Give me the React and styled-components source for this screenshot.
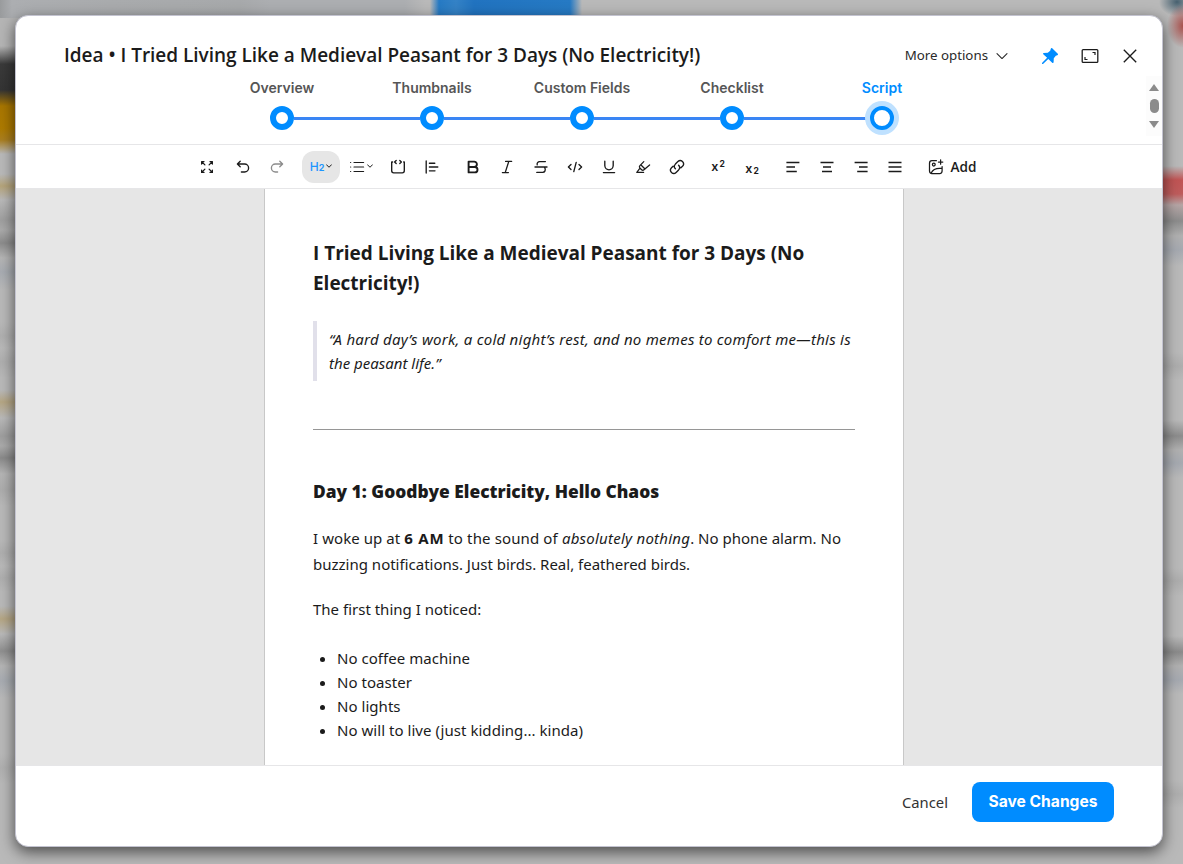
import React from "react";
import styled, { createGlobalStyle, css } from "styled-components";

const BLUE = "#008cff";
const INK = "#1b1b1b";
const UI_FONT = '"Noto Sans", "Open Sans", sans-serif';
const HEAD_FONT = '"Open Sans", "Noto Sans", sans-serif';

const GlobalStyle = createGlobalStyle`
  *, *::before, *::after { box-sizing: border-box; }
  body { margin: 0; background: #b9b9b9; color: ${INK}; font-family: ${UI_FONT}; }
  button { border: 0; padding: 0; margin: 0; background: none; font: inherit; color: inherit; }
  svg { display: block; flex: none; }
`;

const Page = styled.div`
  width: 1183px;
  height: 864px;
  padding: 15px 20px 17px 15px;
  overflow: hidden;
  background-color: #b9b9b9;
  background-image:
    radial-gradient(ellipse 16px 22px at 100% 26px, #a8504c 0%, rgba(168, 80, 76, 0) 100%),
    radial-gradient(ellipse 18px 14px at 1177px 2px, #46606f 0%, rgba(70, 96, 111, 0) 100%),
    linear-gradient(90deg, rgba(38, 122, 196, 0) 0, #267ac4 9px, #3482c6 26px, #2173c0 44px, #267ac4 140px, rgba(38, 122, 196, 0) 100%),
    linear-gradient(90deg, #999b9d 0, #acaeb1 12px, #a9abad 110px, #a7a9ab 240px, #acaeb1 270px, #acaeb1 405px, rgba(172, 174, 177, 0) 100%),
    linear-gradient(180deg, #b5b5b5 0, #b5b5b5 46px, #3a3a3a 64px, #343434 90px, #a87600 106px, #ad7a00 128px, #a97e20 140px, #b9b9b9 154px,
      #b9b9b9 174px, #b5a47a 186px, #b9b9b9 200px, #9f9f9f 220px, #aaa 230px, #8c8c8c 243px, #b5b5b5 258px, #a8acb2 272px, #b9b9b9 290px,
      #b9b9b9 322px, #b0b0b0 336px, #b9b9b9 348px, #afafaf 362px, #b9b9b9 378px, #b9b9b9 390px, #b5a684 402px, #b9b9b9 418px, #9e9e9e 436px, #aaa 446px,
      #8a8a8a 458px, #b5b5b5 474px, #adadad 490px, #b9b9b9 506px, #b9b9b9 540px, #afafaf 553px, #b9b9b9 566px, #afafaf 578px, #b9b9b9 592px,
      #b9b9b9 606px, #b5a684 619px, #b9b9b9 634px, #8f8f8f 651px, #b5b5b5 666px, #a8acb2 681px, #b9b9b9 698px, #b9b9b9 754px, #b0b0b0 768px, #b9b9b9 784px),
    linear-gradient(180deg, #b9b9b9 0, #b9b9b9 166px, #c05454 180px, #be5c5c 194px, #b5a5a5 205px, #8c8c8c 221px, #b0b0b0 236px, #a5a9b0 250px, #b9b9b9 266px,
      #b9b9b9 352px, #adadad 366px, #b9b9b9 380px, #b9b9b9 420px, #8c8c8c 436px, #b0b0b0 450px, #a5a9b0 463px, #b9b9b9 478px, #b9b9b9 568px, #adadad 581px, #b9b9b9 596px,
      #b9b9b9 636px, #8a8a8a 652px, #b0b0b0 666px, #a5a9b0 680px, #b9b9b9 694px, #b9b9b9 780px, #aeaeae 794px, #b9b9b9 808px);
  background-repeat: no-repeat;
  background-position: 0 0, 0 0, 430px 0, 0 0, 0 0, 100% 0;
  background-size: auto, auto, 152px 18px, 425px 18px, 18px 100%, 24px 100%;
`;

const Modal = styled.section`
  height: 832px;
  display: flex;
  flex-direction: column;
  background: #fff;
  border: 1px solid #c3c3d0;
  border-radius: 13px;
  overflow: hidden;
  box-shadow: 0 5px 15px rgba(0, 0, 0, 0.6);
`;

const Header = styled.header`
  flex: none;
  height: 129px;
  border-bottom: 1px solid #e6e6e8;
`;

const TitleRow = styled.div`
  display: flex;
  align-items: center;
  height: 60px;
  padding: 19px 22px 0 48px;
`;

const Title = styled.h1`
  margin: 0;
  flex: 1;
  padding-bottom: 2px;
  font: 600 19px/28px ${HEAD_FONT};
  letter-spacing: -0.02px;
  white-space: nowrap;
`;

const MoreOptions = styled.button`
  display: flex;
  align-items: center;
  gap: 8px;
  margin-right: 32px;
  padding-bottom: 1px;
  font-size: 13.3px;
  color: #2a2a2a;
  svg { margin-top: 2px; }
`;

const HeaderIcons = styled.div`
  display: flex;
  gap: 20px;
`;

const HeaderIcon = styled.button`
  display: grid;
  place-items: center;
  width: 20px;
  height: 20px;
`;

const StepperRow = styled.div`
  display: flex;
  justify-content: space-between;
  height: 60px;
`;

const Steps = styled.ol`
  display: flex;
  list-style: none;
  margin: 0;
  padding: 4px 0 0 191px;
`;

const Step = styled.li`
  display: flex;
  flex-direction: column;
  align-items: center;
  width: 150px;
  gap: 10px;
  font: 600 14px/16px Inter, "Liberation Sans", sans-serif;
  color: ${(p) => (p.$active ? BLUE : "#565656")};
`;

const Track = styled.div`
  align-self: stretch;
  display: grid;
  grid-template-columns: 1fr 24px 1fr;
  align-items: center;
  justify-items: center;
`;

const Line = styled.span`
  width: 100%;
  height: 3px;
  background: ${(p) => (p.$hidden ? "transparent" : "#3a85f4")};
`;

const Dot = styled.span`
  width: 24px;
  height: 24px;
  border-radius: 50%;
  background: #fff;
  border: ${(p) => (p.$active ? "4.5px" : "6.5px")} solid ${BLUE};
  ${(p) => p.$active && css`box-shadow: 0 0 0 5px #bfe1ff;`}
`;

const ScrollTrack = styled.div`
  display: flex;
  flex-direction: column;
  align-items: center;
  justify-content: space-between;
  width: 16px;
  padding: 8px 0 8px;
  background: #fcfcfc;
`;

const ScrollArrow = styled.span`
  width: 0;
  height: 0;
  border: 5px solid transparent;
  border-${(p) => (p.$down ? "top" : "bottom")}: 7px solid #8b8b8b;
  border-${(p) => (p.$down ? "bottom" : "top")}: 0;
`;

const ScrollThumb = styled.span`
  width: 9px;
  height: 14px;
  border-radius: 5px;
  background: #8b8b8b;
`;

const Toolbar = styled.div`
  flex: none;
  display: flex;
  align-items: center;
  height: 44px;
  padding-left: 175px;
  border-bottom: 1px solid #e6e6e8;
`;

const ToolGroup = styled.div`
  display: flex;
  gap: ${(p) => p.$gap ?? 2}px;
  margin-right: ${(p) => p.$after ?? 9}px;
`;

const Tool = styled.button`
  display: flex;
  align-items: center;
  justify-content: center;
  gap: 2px;
  width: ${(p) => p.$w || 32}px;
  height: 32px;
  border-radius: 12px;
  color: ${(p) => (p.$dim ? "#8c8c8c" : INK)};
  background: ${(p) => (p.$active ? "#e6e6e6" : "transparent")};
`;

const AddTool = styled(Tool)`
  gap: 7px;
  font: 600 13.6px/20px ${HEAD_FONT};
`;

const Level = styled.span`
  display: flex;
  align-items: baseline;
  padding-top: 1px;
  font: 500 12px/16px Inter, sans-serif;
  color: #1e96ff;
  small { font-size: 9px; font-weight: 700; }
`;

const Script = styled.span`
  display: flex;
  align-items: ${(p) => (p.$sub ? "flex-end" : "flex-start")};
  height: ${(p) => (p.$sub ? 17 : 14)}px;
  font: 600 12.5px/13px Inter, sans-serif;
  small { font-size: 8.5px; font-weight: 700; line-height: 8px; margin-left: 1px; }
`;

const Desk = styled.main`
  flex: 1;
  min-height: 0;
  display: flex;
  justify-content: center;
  padding-right: 10px;
  background: #e6e6e6;
  overflow: hidden;
`;

const Paper = styled.article`
  width: 640px;
  padding: 49px 48px 0;
  background: #fff;
  border: solid #c8c8c8;
  border-width: 0 1px;
  font: 400 15px/24px ${UI_FONT};
  white-space: nowrap;
`;

const DocTitle = styled.h2`
  margin: 0 0 23px;
  font: 700 19px/30px ${HEAD_FONT};
  letter-spacing: -0.02px;
`;

const Quote = styled.blockquote`
  margin: 0;
  padding: 6px 0 6px 12px;
  border-left: 4px solid #e1e0ea;
  font-style: italic;
  letter-spacing: 0.245px;
`;

const Rule = styled.hr`
  margin: 48px 0;
  border: 0;
  height: 1px;
  background: #969696;
`;

const SubTitle = styled.h3`
  margin: 0 0 21px;
  font: 800 17.35px/27px ${HEAD_FONT};
`;

const Paragraph = styled.p`
  margin: 0 0 20px;
  line-height: 25.6px;
  strong { letter-spacing: 0.75px; }
  em { letter-spacing: 0.24px; }
`;

const Phrase = styled.span`
  letter-spacing: ${(p) => p.$ls}px;
`;

const List = styled.ul`
  margin: 23px 0 0;
  padding-left: 24px;
  letter-spacing: 0.04px;
`;

const Footer = styled.footer`
  flex: none;
  display: flex;
  align-items: center;
  justify-content: flex-end;
  gap: 24px;
  height: 81px;
  padding: 0 48px 8px 0;
  border-top: 1px solid #e6e6e8;
`;

const Cancel = styled.button`
  font-size: 14.8px;
  color: #333;
`;

const Save = styled.button`
  width: 142px;
  height: 40px;
  padding-bottom: 1px;
  border-radius: 8px;
  background: ${BLUE};
  color: #fff;
  font: 700 15.6px/20px Inter, "Liberation Sans", sans-serif;
`;

const Svg = ({ size = 16, sw = 1.35, children, ...rest }) => (
  <svg width={size} height={size} viewBox="0 0 16 16" fill="none" stroke="currentColor"
    strokeWidth={sw} strokeLinecap="round" strokeLinejoin="round" {...rest}>
    {children}
  </svg>
);

const Chevron = ({ w = 6, sw = 1 }) => (
  <svg width={w} height={w * 0.67} viewBox="0 0 12 8" fill="none" stroke="currentColor"
    strokeWidth={(sw * 12) / w} strokeLinecap="round" strokeLinejoin="round">
    <path d="M1 1.5 6 6.5 11 1.5" />
  </svg>
);

const icons = {
  expand: <Svg sw={1.25}><path d="M2.600 5V2.600H5M2.800 2.800l3.100 3.100M11 2.600h2.400V5M13.200 2.800l-3.100 3.100M2.600 11v2.400H5M2.800 13.200l3.100-3.100M13.400 11v2.400H11M13.200 13.200l-3.100-3.100" /></Svg>,
  undo: <Svg><path d="M5.200 2.200 2.400 5l2.800 2.800M2.600 5h7a4 4 0 0 1 0 8H6.400" /></Svg>,
  redo: <Svg><path d="M10.800 2.200 13.600 5l-2.800 2.800M13.400 5h-7a4 4 0 0 0 0 8h2.200" /></Svg>,
  bullets: <Svg sw={1.200}><path d="M5 3.500h9.600M5 8h9.600M5 12.500h9.600" /><path d="M1.600 3.500h.1M1.600 8h.1M1.600 12.500h.1" /></Svg>,
  codeBlock: <Svg><path d="M6.200 1.400 4.600 3l1.600 1.600M9.800 1.400 11.400 3 9.800 4.600M2.600 3H1.700v8.800a2 2 0 0 0 2 2h8.600a2 2 0 0 0 2-2V3h-.6" /></Svg>,
  indent: <Svg><path d="M2.200 2v12M5.400 4.200h5.400M5.400 8h8.400M5.400 11.800H11" /></Svg>,
  bold: <Svg sw={1.900}><path d="M3.600 2.600h5.600a2.700 2.700 0 0 1 0 5.400H3.600zM3.600 8h6.200a2.700 2.700 0 0 1 0 5.400H3.600z" /></Svg>,
  italic: <Svg><path d="M6.600 2.400h6M3.400 13.600h6M9.800 2.400 6.200 13.600" /></Svg>,
  strike: <Svg><path d="M12.400 2.600H6.600a2.600 2.600 0 0 0-2.400 3.300M2 8h12M11.600 8.400c1.600 2.600.2 5-2 5H3.800" /></Svg>,
  code: <Svg><path d="M4 5.400 1.400 8 4 10.600M12 5.400 14.600 8 12 10.600M9.200 3.400 6.800 12.600" /></Svg>,
  underline: <Svg><path d="M3.800 2.200v4.400a4.200 4.200 0 0 0 8.400 0V2.200M2.400 13.600h11.200" /></Svg>,
  marker: <Svg sw={1.250}><path d="M8.800 2.600 4.900 6.600a1.800 1.800 0 0 0 0 2.400l1.700 1.700a1.800 1.800 0 0 0 2.400 0L14.600 6M5 9.200 1.800 13.400h6.800M6 6l4 4" /></Svg>,
  link: <Svg><path d="M6.400 9.800C5 8.400 5.200 6.400 6.400 5.100L8.900 2.600a3.200 3.200 0 0 1 4.600 4.600L11.900 8.800M9.600 6.200c1.400 1.400 1.200 3.400 0 4.700L7.100 13.400a3.200 3.200 0 0 1-4.600-4.600L4.100 7.200" /></Svg>,
  alignLeft: <Svg strokeLinecap="butt"><path d="M1.400 3.500h13M1.400 8h8.600M1.400 12.500h10.400" /></Svg>,
  alignCenter: <Svg strokeLinecap="butt"><path d="M1.500 3.500h13M4 8h8M3 12.500h10" /></Svg>,
  alignRight: <Svg strokeLinecap="butt"><path d="M1.600 3.500h13M6 8h8.600M4.200 12.500h10.400" /></Svg>,
  justify: <Svg strokeLinecap="butt"><path d="M1.500 3.500h13M1.500 8h13M1.500 12.500h13" /></Svg>,
  image: <Svg sw={1.250}><path d="M8.400 1.700H4a2.500 2.500 0 0 0-2.500 2.500v7.800A2.500 2.500 0 0 0 4 14.500h7.600a2.500 2.500 0 0 0 2.500-2.500V7.600M12.600.8v4.400M10.400 3h4.400M3.200 14c1.600-3.600 5.200-5.200 10.600-4.600" /><circle cx="5.800" cy="5.600" r="1.400" /></Svg>,
};

const stepNames = ["Overview", "Thumbnails", "Custom Fields", "Checklist", "Script"];

export default function App() {
  return (
    <Page>
      <GlobalStyle />
      <Modal>
        <Header>
          <TitleRow>
            <Title>Idea • I Tried Living Like a Medieval Peasant for 3 Days (No Electricity!)</Title>
            <MoreOptions>
              More options
              <Chevron w={12} sw={1.1} />
            </MoreOptions>
            <HeaderIcons>
              <HeaderIcon>
                <svg width="18" height="18" viewBox="0 0 18 18" fill={BLUE}>
                  <path d="M11.200 1.200 16.800 6.800c.5.500.2 1.200-.5 1.400l-1.500.6-2 2.400-.2 4c0 .8-.8 1.100-1.400.5L7.300 11.900 2 17l-.9-.1-.1-.8 5.100-5.400L2.300 7.300c-.6-.6-.3-1.400.5-1.400l4-.2 2.400-2 .6-1.900c.2-.7.900-1.100 1.400-.6z" />
                </svg>
              </HeaderIcon>
              <HeaderIcon>
                <svg width="18" height="16" viewBox="0 0 18 16" fill="none" stroke={INK} strokeWidth="1.300">
                  <rect x="1.200" y="1.600" width="15.600" height="12.800" rx="1" />
                  <path d="M11.500 4.500H14V7M6.500 11.500H4V9" strokeWidth="1.200" />
                </svg>
              </HeaderIcon>
              <HeaderIcon>
                <svg width="14" height="14" viewBox="0 0 14 14" stroke={INK} strokeWidth="1.350">
                  <path d="M.8.800 13.200 13.200M13.200.8.800 13.200" />
                </svg>
              </HeaderIcon>
            </HeaderIcons>
          </TitleRow>
          <StepperRow>
            <Steps>
              {stepNames.map((name, i) => {
                const last = i === stepNames.length - 1;
                return (
                  <Step key={name} $active={last}>
                    {name}
                    <Track>
                      <Line $hidden={i === 0} />
                      <Dot $active={last} />
                      <Line $hidden={last} />
                    </Track>
                  </Step>
                );
              })}
            </Steps>
            <ScrollTrack>
              <ScrollArrow />
              <ScrollThumb />
              <ScrollArrow $down />
            </ScrollTrack>
          </StepperRow>
        </Header>

        <Toolbar>
          <ToolGroup $after={4}><Tool>{icons.expand}</Tool></ToolGroup>
          <ToolGroup>
            <Tool>{icons.undo}</Tool>
            <Tool $dim>{icons.redo}</Tool>
          </ToolGroup>
          <ToolGroup>
            <Tool $w={38} $active>
              <Level>H<small>2</small></Level>
              <Chevron />
            </Tool>
            <Tool $w={38}>{icons.bullets}<Chevron /></Tool>
            <Tool>{icons.codeBlock}</Tool>
            <Tool>{icons.indent}</Tool>
          </ToolGroup>
          <ToolGroup>
            <Tool>{icons.bold}</Tool>
            <Tool>{icons.italic}</Tool>
            <Tool>{icons.strike}</Tool>
            <Tool>{icons.code}</Tool>
            <Tool>{icons.underline}</Tool>
            <Tool>{icons.marker}</Tool>
            <Tool>{icons.link}</Tool>
          </ToolGroup>
          <ToolGroup>
            <Tool><Script>x<small>2</small></Script></Tool>
            <Tool><Script $sub>x<small>2</small></Script></Tool>
          </ToolGroup>
          <ToolGroup>
            <Tool>{icons.alignLeft}</Tool>
            <Tool>{icons.alignCenter}</Tool>
            <Tool>{icons.alignRight}</Tool>
            <Tool>{icons.justify}</Tool>
          </ToolGroup>
          <AddTool $w={64}>{icons.image}Add</AddTool>
        </Toolbar>

        <Desk>
          <Paper>
            <DocTitle>
              I Tried Living Like a Medieval Peasant for 3 Days (No<br />Electricity!)
            </DocTitle>
            <Quote>
              “A hard day’s work, a cold night’s rest, and no memes to comfort me—this is<br />
              <Phrase $ls={0}>the peasant life.”</Phrase>
            </Quote>
            <Rule />
            <SubTitle>Day 1: Goodbye Electricity, Hello Chaos</SubTitle>
            <Paragraph>
              <Phrase $ls={0.07}>I woke up at </Phrase>
              <strong>6 AM</strong>
              <Phrase $ls={0.13}> to the sound of </Phrase>
              <em>absolutely nothing</em>. No phone alarm. No<br />
              buzzing notifications. Just birds. Real, feathered birds.
            </Paragraph>
            <Paragraph>The first thing I noticed:</Paragraph>
            <List>
              <li>No coffee machine</li>
              <li>No toaster</li>
              <li>No lights</li>
              <li>No will to live (just kidding... kinda)</li>
            </List>
          </Paper>
        </Desk>

        <Footer>
          <Cancel>Cancel</Cancel>
          <Save>Save Changes</Save>
        </Footer>
      </Modal>
    </Page>
  );
}
